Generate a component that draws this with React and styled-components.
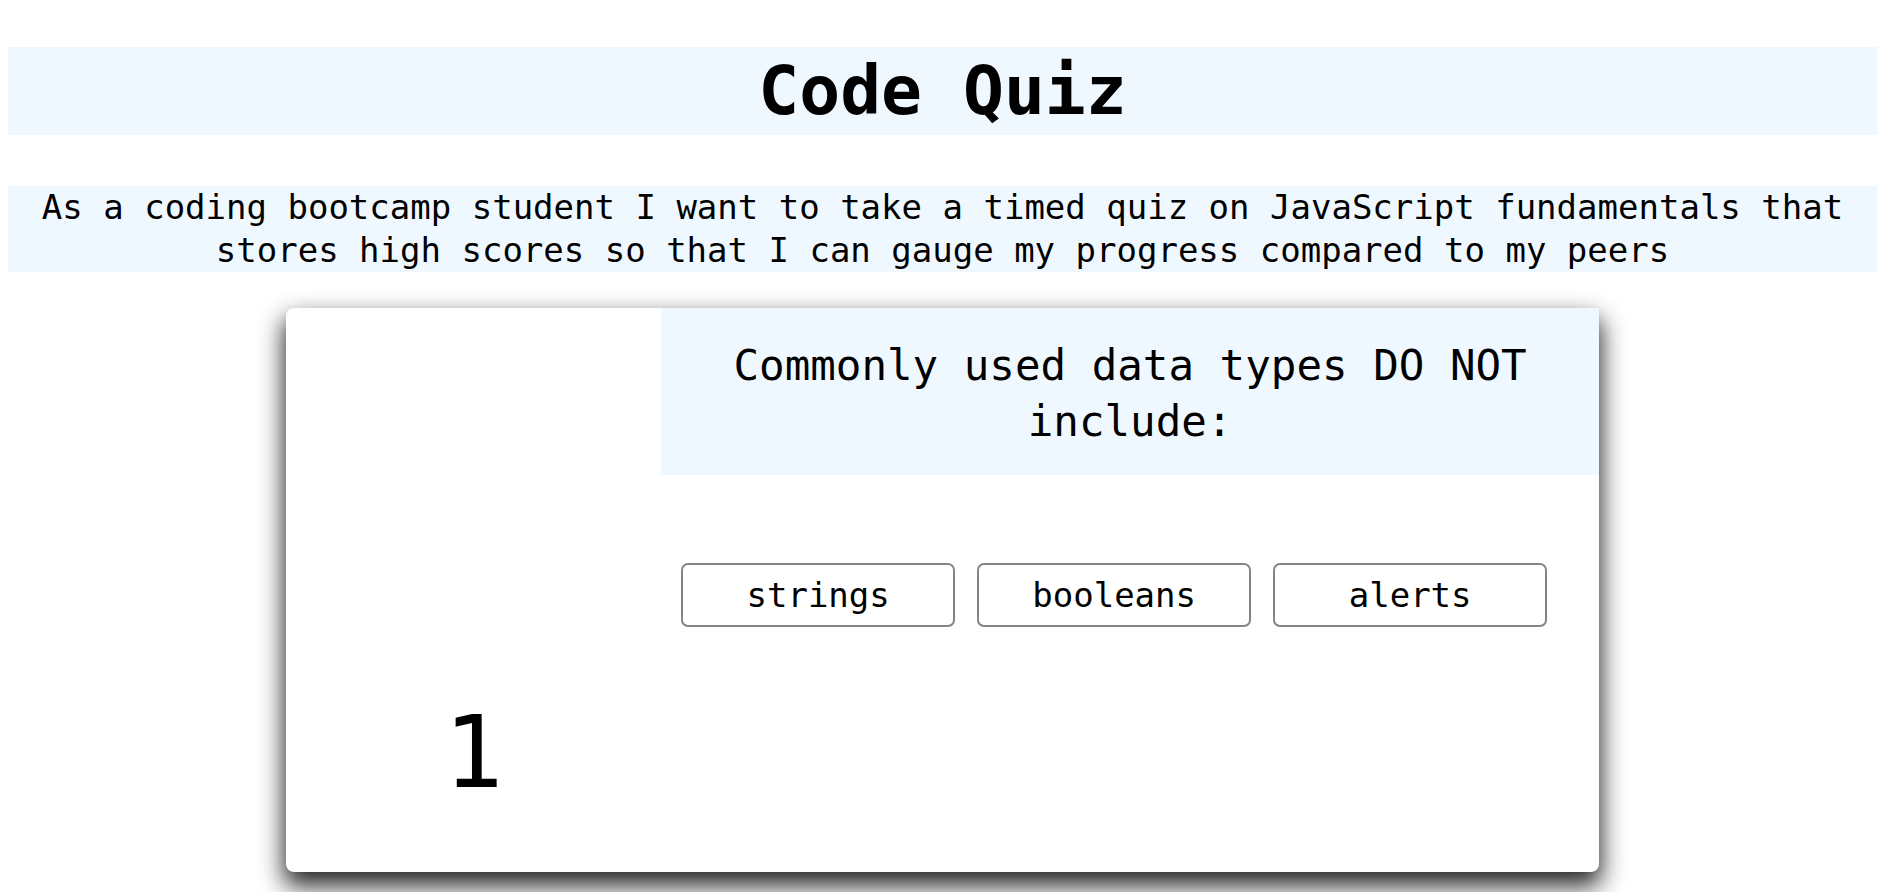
import React, { useState } from 'react'
import styled, { createGlobalStyle } from 'styled-components'

const mono = `"DejaVu Sans Mono", "Liberation Mono", monospace`

const GlobalStyle = createGlobalStyle`
  body {
    margin: 0;
    background: #ffffff;
    color: #000000;
    font-family: ${mono};
  }
`

const Page = styled.div`
  padding: 47px 15px 20px 8px;
`

const Title = styled.h1`
  margin: 0;
  height: 88px;
  line-height: 88px;
  font-size: 68px;
  font-weight: bold;
  text-align: center;
  background: #f0f8ff;
`

const Story = styled.p`
  margin: 51px 0 0;
  font-size: 34px;
  line-height: 43px;
  text-align: center;
  background: #f0f8ff;
`

const Card = styled.section`
  display: grid;
  grid-template-columns: 2fr 5fr;
  width: 1313px;
  height: 564px;
  margin: 36px auto 0;
  background: #ffffff;
  border-radius: 8px;
  box-shadow: 0 12px 24px 2px rgba(0, 0, 0, 0.85);
`

const Timer = styled.div`
  display: flex;
  align-items: flex-end;
  justify-content: center;
  padding-bottom: 70px;
  font-size: 99px;
  line-height: 99px;
`

const QuizColumn = styled.div`
  display: flex;
  flex-direction: column;
`

const Question = styled.h2`
  margin: 0;
  padding: 30px 20px 25px;
  font-size: 42.5px;
  line-height: 56px;
  font-weight: normal;
  text-align: center;
  background: #f0f8ff;
`

const Answers = styled.div`
  display: flex;
  gap: 22px;
  margin-top: 88px;
  padding-left: 20px;
`

const Answer = styled.button`
  box-sizing: border-box;
  width: 274px;
  height: 64px;
  padding: 0;
  border: 2px solid #858585;
  border-radius: 7px;
  background: #ffffff;
  color: #000000;
  font-family: ${mono};
  font-size: 34px;
  cursor: pointer;
`

const question = {
  title: 'Commonly used data types DO NOT include:',
  choices: ['strings', 'booleans', 'alerts'],
}

function App() {
  const [time] = useState(1)

  return (
    <Page>
      <GlobalStyle />
      <Title>Code Quiz</Title>
      <Story>
        As a coding bootcamp student I want to take a timed quiz on JavaScript
        fundamentals that stores high scores so that I can gauge my progress
        compared to my peers
      </Story>
      <Card>
        <Timer>{time}</Timer>
        <QuizColumn>
          <Question>{question.title}</Question>
          <Answers>
            {question.choices.map((choice) => (
              <Answer key={choice} type="button">
                {choice}
              </Answer>
            ))}
          </Answers>
        </QuizColumn>
      </Card>
    </Page>
  )
}

export default App
